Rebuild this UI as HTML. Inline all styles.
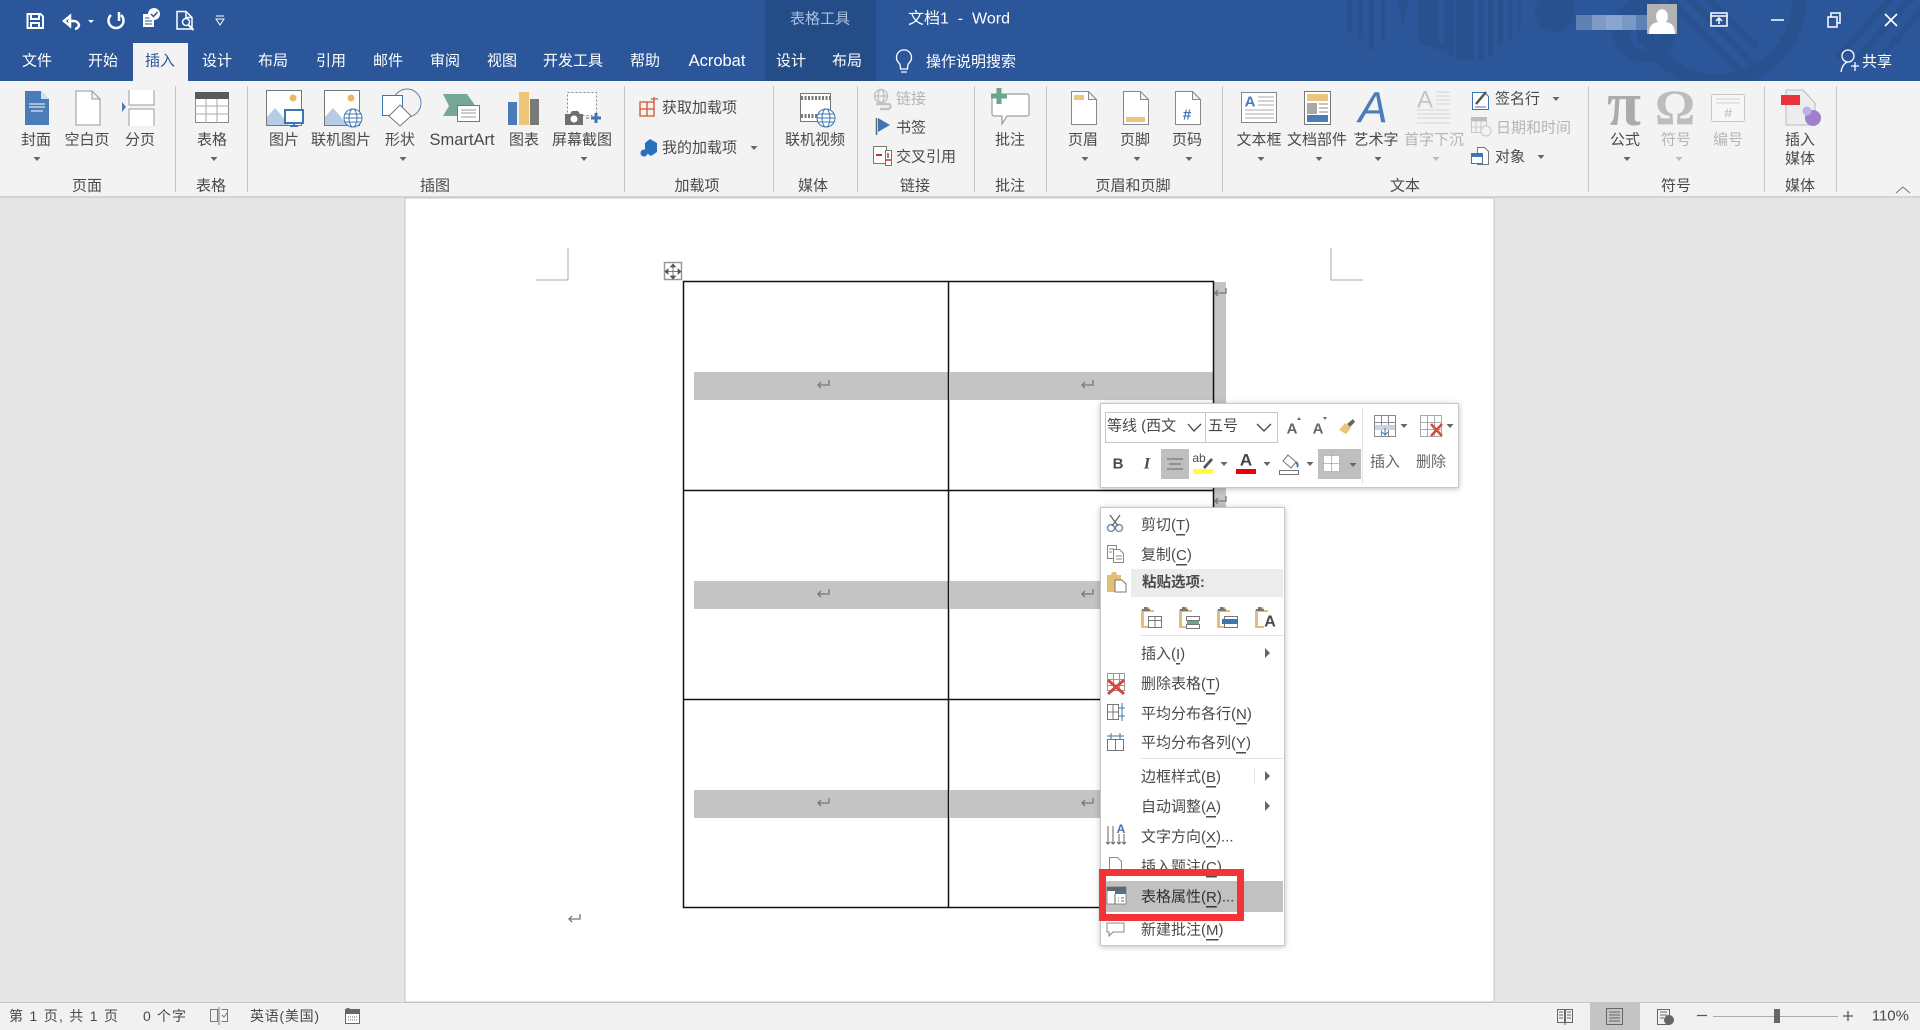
<!DOCTYPE html>
<html lang="zh"><head><meta charset="utf-8"><title>文档1 - Word</title>
<style>
html,body{margin:0;padding:0;width:1920px;height:1030px;overflow:hidden;background:#e6e6e6}
svg{display:block}
text{font-family:"Liberation Sans","Noto Sans CJK SC",sans-serif;font-size:15px;fill:#4a4a4a;dominant-baseline:central}
.m{text-anchor:middle}
.w{fill:#fff}
.d{fill:#b5b5b5}
.u{text-decoration:underline}
.shadow{filter:drop-shadow(0 1px 3px rgba(0,0,0,.25))}
</style></head><body>
<svg width="1920" height="1030" viewBox="0 0 1920 1030" xmlns="http://www.w3.org/2000/svg">
<defs><path id="dn" d="M-3.5 -2h7l-3.500 4z" fill="#666"/><path id="dd" d="M-3.5 -2h7l-3.500 4z" fill="#bbb"/><path id="rt" d="M-2 -5l5 5-5 5z" fill="#666"/>
<path id="ret" d="M12 0v5H1M4 2L1 5l3 3" fill="none" stroke="#777" stroke-width="1.300"/></defs>

<!-- backgrounds -->
<rect width="1920" height="1030" fill="#e6e6e6"/>
<rect width="1920" height="81" fill="#2b579a"/>
<rect x="765" width="111" height="81" fill="#244c87"/>
<!-- title decoration -->
<g fill="#28518f">
<rect x="1347" width="5" height="32"/><rect x="1358" width="5" height="38"/><rect x="1369" width="5" height="50"/><rect x="1381" width="4" height="40"/>
<path d="M1397 0h12l-6 25zM1418 0h20v42l6 4V0h10v56l-10-4-26-10z"/>
<rect x="1456" width="18" height="60"/><rect x="1478" width="6" height="60"/><rect x="1488" width="5" height="56"/><rect x="1498" width="5" height="46"/><rect x="1508" width="4" height="40"/><rect x="1518" width="3" height="30"/>
<circle cx="1555" cy="12" r="20"/>
<path d="M1612 30a32 32 0 1 0 64 0 32 32 0 1 0-64 0zm18 6a15 15 0 1 1 30 0 15 15 0 1 1-30 0z" fill-rule="evenodd"/>
<circle cx="1645" cy="38" r="8"/>
<path d="M1630 0a88 88 0 0 0 176 0h-14a74 74 0 0 1-148 0z"/>
<path d="M1665 0l72 72h10L1675 0zM1685 0l70 70h8L1695 0zM1705 0l50 50 4-6L1715 0z"/>
<path d="M1885 0l-50 56 5 4 54-60zM1905 0l-54 60 5 4L1915 0zM1920 6l-48 58 5 3 43-50z"/>
</g>
<!-- ribbon -->
<rect y="81" width="1920" height="116" fill="#f3f3f3"/>
<rect y="196" width="1920" height="2" fill="#d4d4d4"/>
<rect x="133" y="43" width="55" height="38" fill="#f3f3f3"/>
<!-- status -->
<rect y="1003" width="1920" height="27" fill="#f1f1f1"/>
<rect y="1002" width="1920" height="1" fill="#c6c6c6"/>
<rect x="1590" y="1003" width="50" height="27" fill="#c4c4c4"/>
<!-- page -->
<rect x="405" y="198" width="1089" height="804" fill="#fff" stroke="#c6c6c6"/>

<!-- QAT -->
<g fill="none" stroke="#fff" stroke-width="2">
<path d="M27.500 14h13l2.500 2.500V28H27.500zM31 14v5h8v-5M31 28v-5h8v5"/>
<path d="M64 21l6-5v10zM68 21h6a5 5 0 0 1 5 4 5 5 0 0 1-4 4" stroke-width="2.500"/>
<path d="M119 12v9M111 15a7.500 7.500 0 1 0 10 0" stroke-width="2.500"/>
</g>
<path d="M143 14h11v13h-11z" fill="#fff"/><path d="M145 18h7M145 21h7M145 24h7" stroke="#2b579a" fill="none"/><circle cx="154" cy="14" r="6" fill="#fff"/><path d="M151 14l2.500 2.500 4-4.500" stroke="#2b579a" stroke-width="1.500" fill="none"/>
<g fill="none" stroke="#fff" stroke-width="1.500">
<path d="M177 11.500h9l6 6V29h-15zM186 11.500v6h6"/><circle cx="186" cy="22" r="3.500"/><path d="M188.500 25l5 5" stroke-width="2"/>
<path d="M216 19h8l-4 6zM216 16h8" stroke-width="1"/>
</g>
<path d="M88 20h6l-3 3z" fill="#fff"/>
<!-- titles -->
<text x="820" y="19" class="m" style="fill:#a9c0e2;font-size:15px">表格工具</text>
<text x="959" y="19" class="m w" style="font-size:16px">文档1&#160; -&#160; Word</text>
<!-- tabs -->
<g>
<text x="37" y="61" class="m w">文件</text><text x="103" y="61" class="m w">开始</text><text x="160" y="61" class="m" style="fill:#2b579a">插入</text>
<text x="217" y="61" class="m w">设计</text><text x="273" y="61" class="m w">布局</text><text x="331" y="61" class="m w">引用</text>
<text x="388" y="61" class="m w">邮件</text><text x="445" y="61" class="m w">审阅</text><text x="502" y="61" class="m w">视图</text>
<text x="573" y="61" class="m w">开发工具</text><text x="645" y="61" class="m w">帮助</text><text x="717" y="61" class="m w" style="font-size:16.500px">Acrobat</text>
<text x="791" y="61" class="m w">设计</text><text x="847" y="61" class="m w">布局</text>
<text x="971" y="62" class="m w">操作说明搜索</text><text x="1877" y="62" class="m w">共享</text>
</g>
<g fill="none" stroke="#fff" stroke-width="1.300">
<path d="M901 72h6M899 63a7.500 7.500 0 1 1 10 0c-1 1-1.500 3-1.500 6h-7c0-3-.5-5-1.500-6z"/>
<circle cx="1848" cy="56" r="6"/><path d="M1841 72c1-6 3-9 7-10M1851 66h8M1855 62v9"/>
</g>
<!-- window controls -->
<g fill="none" stroke="#fff" stroke-width="1.500">
<path d="M1711 13h16v13h-16zM1711 16h16"/><path d="M1719 24v-6M1716 21l3-3 3 3"/>
<path d="M1771 20h13"/>
<path d="M1828 17h9v10h-9zM1831 17v-4h9v10h-3"/>
<path d="M1885 14l12 12M1897 14l-12 12" stroke-width="1.700"/>
</g>
<!-- blurred name + avatar -->
<rect x="1576" y="15" width="72" height="15" fill="#5f82b5"/><rect x="1592" y="15" width="14" height="15" fill="#7d9bc6"/><rect x="1606" y="15" width="16" height="15" fill="#8ba6ce"/><rect x="1622" y="15" width="14" height="15" fill="#7a98c4"/>
<rect x="1647" y="4" width="30" height="30" fill="#b2b2b2"/>
<path d="M1649 34c0-9 4-11 9-12-3-3-3-12 4-13 7 1 7 10 4 13 5 1 9 3 9 12z" fill="#fff"/>

<!-- separators -->
<g fill="#c6c6c6"><rect x="175" y="86" width="1" height="106"/><rect x="247" y="86" width="1" height="106"/><rect x="624" y="86" width="1" height="106"/><rect x="773" y="86" width="1" height="106"/><rect x="857" y="86" width="1" height="106"/><rect x="974" y="86" width="1" height="106"/><rect x="1046" y="86" width="1" height="106"/><rect x="1222" y="86" width="1" height="106"/><rect x="1588" y="86" width="1" height="106"/><rect x="1764" y="86" width="1" height="106"/><rect x="1836" y="86" width="1" height="106"/></g>

<!-- ribbon labels -->
<g>
<text x="36" y="140" class="m">封面</text><text x="87" y="140" class="m">空白页</text><text x="140" y="140" class="m">分页</text>
<text x="212" y="140" class="m">表格</text><text x="284" y="140" class="m">图片</text><text x="341" y="140" class="m">联机图片</text><text x="400" y="140" class="m">形状</text>
<text x="462" y="140" class="m" style="font-size:16.500px">SmartArt</text><text x="524" y="140" class="m">图表</text><text x="582" y="140" class="m">屏幕截图</text>
<text x="662" y="108">获取加载项</text><text x="662" y="148">我的加载项</text>
<text x="815" y="140" class="m">联机视频</text>
<text x="896" y="99" class="d">链接</text><text x="896" y="128">书签</text><text x="896" y="157">交叉引用</text>
<text x="1010" y="140" class="m">批注</text>
<text x="1083" y="140" class="m">页眉</text><text x="1135" y="140" class="m">页脚</text><text x="1187" y="140" class="m">页码</text>
<text x="1259" y="140" class="m">文本框</text><text x="1317" y="140" class="m">文档部件</text><text x="1376" y="140" class="m">艺术字</text><text x="1434" y="140" class="m d">首字下沉</text>
<text x="1495" y="99">签名行</text><text x="1496" y="128" class="d">日期和时间</text><text x="1495" y="157">对象</text>
<text x="1625" y="140" class="m">公式</text><text x="1676" y="140" class="m d">符号</text><text x="1728" y="140" class="m d">编号</text>
<text x="1800" y="140" class="m">插入</text><text x="1800" y="159" class="m">媒体</text>
<text x="87" y="186" class="m">页面</text><text x="211" y="186" class="m">表格</text><text x="435" y="186" class="m">插图</text><text x="697" y="186" class="m">加载项</text>
<text x="813" y="186" class="m">媒体</text><text x="915" y="186" class="m">链接</text><text x="1010" y="186" class="m">批注</text><text x="1133" y="186" class="m">页眉和页脚</text>
<text x="1405" y="186" class="m">文本</text><text x="1676" y="186" class="m">符号</text><text x="1800" y="186" class="m">媒体</text>
</g>
<!-- dropdown arrows -->
<use href="#dn" x="37" y="159"/><use href="#dn" x="214" y="159"/><use href="#dn" x="403" y="159"/><use href="#dn" x="584" y="159"/><use href="#dn" x="754" y="148"/>
<use href="#dn" x="1085" y="159"/><use href="#dn" x="1137" y="159"/><use href="#dn" x="1189" y="159"/><use href="#dn" x="1261" y="159"/><use href="#dn" x="1319" y="159"/><use href="#dn" x="1378" y="159"/><use href="#dd" x="1436" y="159"/>
<use href="#dn" x="1556" y="99"/><use href="#dn" x="1541" y="157"/><use href="#dn" x="1627" y="159"/><use href="#dd" x="1679" y="159"/>
<path d="M1896 193l7-6 7 6" fill="none" stroke="#777"/>

<!-- ribbon icons -->
<path d="M25 91h16l8 8v26H25z" fill="#4a7db8"/><path d="M41 91v8h8z" fill="#cfe0f0"/><path d="M29 104h16M29 107h16M31 111h12" stroke="#fff" fill="none"/>
<path d="M76 91h16l8 8v26H76zM92 91v8h8" fill="#fff" stroke="#999"/>
<path d="M129 90v15h25V90M129 126v-17h25v17" fill="#fff" stroke="#999"/><path d="M122 102l4 5-4 5z" fill="#4a7db8"/>
<rect x="195.500" y="92.500" width="33" height="30" fill="#fff" stroke="#888"/><rect x="195" y="92" width="34" height="7" fill="#595959"/><path d="M195 106h34M195 114h34M206 99v24M217 99v24" stroke="#aaa" fill="none"/>
<!-- picture -->
<rect x="266.500" y="90.500" width="35" height="35" fill="#fff" stroke="#777"/><circle cx="293" cy="98" r="3.500" fill="#eab765"/><path d="M267 125v-8l8-9 8 9 6 8z" fill="#b6cce4"/><rect x="285" y="110" width="18" height="13" fill="#fff" stroke="#3f76b2" stroke-width="2"/><path d="M290 126h8M294 123v3" stroke="#3f76b2" stroke-width="2"/>
<rect x="324.500" y="90.500" width="35" height="35" fill="#fff" stroke="#777"/><circle cx="351" cy="98" r="3.500" fill="#eab765"/><path d="M325 125v-8l8-9 8 9 6 8z" fill="#b6cce4"/>
<g fill="#fff" stroke="#3f76b2"><circle cx="353" cy="118" r="9"/><ellipse cx="353" cy="118" rx="4" ry="9"/><path d="M344 118h18M345 114h16M345 122h16" fill="none"/></g>
<circle cx="407" cy="103" r="14" fill="none" stroke="#5a86b8"/><rect x="382.500" y="95.500" width="20" height="20" fill="#fff" stroke="#3f76b2"/><path d="M400 105l11 11-11 10-11-10z" fill="#fff" stroke="#777"/>
<path d="M443 94h24l10 14-7 8h-27l6-10z" fill="#76a695"/><rect x="457.500" y="105.500" width="22" height="16" fill="#fff" stroke="#777"/><path d="M461 110h15M461 113h15M461 117h15" stroke="#999"/>
<rect x="508" y="102" width="9" height="23" fill="#4a7db8"/><rect x="519" y="92" width="10" height="33" fill="#efc577"/><rect x="530" y="99" width="9" height="26" fill="#7a7a7a"/>
<rect x="567.500" y="92.500" width="29" height="23" fill="#fff" stroke="#888" stroke-dasharray="2 2"/><path d="M565 114h5l2-3h6l2 3h3v11h-18z" fill="#6f6f6f"/><circle cx="574" cy="119" r="3.500" fill="#fff"/><path d="M591 118h10M596 113v10" stroke="#3f76b2" stroke-width="3"/><path d="M586 118h3" stroke="#3f76b2"/>
<!-- add-ins -->
<g fill="none" stroke="#d0552e" stroke-width="1.300"><path d="M640 102h14v14h-14zM640 109h14M647 102v14M654 102v-5M651 99h7"/></g>
<path d="M650 139l7 4v9l-6 4-6-4v-9z" fill="#2a70c0"/><circle cx="644" cy="153" r="3.500" fill="#2a70c0"/>
<!-- video -->
<rect x="800.500" y="93.500" width="30" height="28" fill="#fff" stroke="#777"/><path d="M801 98h30M801 116h22" stroke="#777" stroke-width="4" stroke-dasharray="2 1.500"/>
<g fill="#fff" stroke="#3f76b2"><circle cx="826" cy="118" r="9"/><ellipse cx="826" cy="118" rx="4" ry="9"/><path d="M817 118h18M818 114h16M818 122h16" fill="none"/></g>
<!-- links -->
<g fill="none" stroke="#c3c3c3" stroke-width="1.500"><circle cx="881" cy="96" r="6.500"/><ellipse cx="881" cy="96" rx="3" ry="6.500"/><path d="M875 96h12"/><path d="M876 104h12a2.500 2.500 0 0 1 0 5h-8" stroke-width="2.500"/></g>
<path d="M876.500 118v17" stroke="#666" stroke-width="1.500"/><path d="M878 118l12 7-12 7z" fill="#3f76b2"/>
<rect x="873.500" y="146.500" width="13" height="17" fill="#fff" stroke="#777"/><rect x="885.500" y="150.500" width="6" height="15" fill="#fff" stroke="#777"/><path d="M876 155h6" stroke="#c0392b" stroke-width="2"/><path d="M886 160h5M888 153v5" stroke="#c0392b" stroke-width="1.500"/>
<!-- comment -->
<path d="M994 94h33a2 2 0 0 1 2 2v18a2 2 0 0 1-2 2h-20l-5 8v-8h-8a2 2 0 0 1-2-2V96" fill="#fff" stroke="#888"/><path d="M991 96h16M999 88v16" stroke="#6aa58c" stroke-width="5"/>
<!-- header/footer/page -->
<g fill="#fff" stroke="#888"><path d="M1071.500 91.500h17l8 8v25h-25zM1088.500 91.500v8h8"/><path d="M1123.500 91.500h17l8 8v25h-25zM1140.500 91.500v8h8"/><path d="M1175.500 91.500h17l8 8v25h-25zM1192.500 91.500v8h8"/></g>
<rect x="1074" y="95" width="10" height="5" fill="#eac57f"/><rect x="1126" y="117" width="19" height="5" fill="#eac57f"/>
<text x="1187" y="115" class="m" style="fill:#3f76b2;font-size:15px;font-weight:bold">#</text>
<!-- textbox -->
<rect x="1241.500" y="92.500" width="35" height="30" fill="#fff" stroke="#888"/><text x="1250" y="102" class="m" style="fill:#4a7db8;font-size:15px;font-weight:bold">A</text><path d="M1258 97h16M1258 101h16M1258 105h16M1245 110h29M1245 114h29M1245 118h29" stroke="#aaa"/>
<rect x="1304.500" y="91.500" width="26" height="33" fill="#fff" stroke="#777"/><rect x="1307" y="94" width="21" height="7" fill="#eac57f"/><rect x="1307" y="103" width="10" height="11" fill="#a8a8a8"/><path d="M1319 104h9M1319 108h9M1319 112h9" stroke="#888"/><rect x="1307" y="115" width="21" height="7" fill="#4a7db8"/>
<text x="1373" y="108" class="m" style="fill:#4a7db8;font-size:44px;font-style:italic;font-family:'Liberation Sans',sans-serif">A</text>
<text x="1425" y="100" class="m" style="fill:#c4c4c4;font-size:24px">A</text><path d="M1436 92h14M1436 96h14M1436 100h14M1436 104h14M1417 110h33M1417 114h33M1417 118h33M1417 123h33" stroke="#d4d4d4"/>
<!-- signature/date/object -->
<path d="M1472.500 92.500h12l4 4v13h-16z" fill="#fff" stroke="#3f76b2"/><path d="M1476 104l10-12" stroke="#555" stroke-width="2.500"/><path d="M1475 107h11" stroke="#3f76b2"/>
<g fill="none" stroke="#c8c8c8"><rect x="1471.500" y="117.500" width="15" height="15"/><path d="M1471 121h16M1476 121v12M1481 121v12M1471 127h16"/><circle cx="1486" cy="131" r="5" fill="#f3f3f3"/></g><rect x="1471" y="117" width="16" height="4" fill="#bdbdbd"/>
<path d="M1477.500 147.500h7l4 4v13h-11z" fill="#fff" stroke="#777"/><rect x="1471.500" y="153.500" width="11" height="10" fill="#fff" stroke="#3f76b2"/><rect x="1472" y="154" width="10" height="3" fill="#3f76b2"/>
<!-- equation etc -->
<text x="1624" y="105" class="m" style="font-family:'Liberation Serif',serif;font-size:62px;font-weight:bold;fill:#ababab">π</text>
<text x="1675" y="107" class="m" style="font-family:'Liberation Serif',serif;font-size:50px;font-weight:bold;fill:#bdbdbd">Ω</text>
<rect x="1711.500" y="94.500" width="33" height="27" rx="2" fill="#f7f7f7" stroke="#c8c8c8"/><path d="M1716 99h24M1716 103h24" stroke="#d0d0d0"/><text x="1728" y="113" class="m" style="fill:#bbb;font-size:14px;font-style:italic">#</text>
<path d="M1786 90h17l12 13v22h-29z" fill="#ededed" stroke="#bbb"/><rect x="1781" y="95" width="19" height="10" fill="#e8323c"/><circle cx="1813" cy="118" r="8" fill="#9d80cf"/><circle cx="1807" cy="111" r="4.500" fill="#c1aee4"/>

<!-- document guides -->
<path d="M568 248v32h-32M1331 248v32h32" fill="none" stroke="#a8a8a8" stroke-width="1"/>
<rect x="664.500" y="262.500" width="17" height="17" fill="#fff" stroke="#999" stroke-width="1.500"/>
<path d="M673 265v13M666 271.500h14M673 264l-2.500 3h5zM673 279l-2.500-3h5zM665 271.500l3-2.500v5zM681 271.500l-3-2.500v5z" fill="#555" stroke="#555" stroke-width=".8"/>

<!-- table shading -->
<rect x="1213" y="282" width="13" height="625" fill="#c4c4c4"/>
<g fill="#c4c4c4"><rect x="694" y="372" width="254" height="28"/><rect x="950" y="372" width="263" height="28"/><rect x="694" y="581" width="254" height="28"/><rect x="950" y="581" width="263" height="28"/><rect x="694" y="790" width="254" height="28"/><rect x="950" y="790" width="263" height="28"/></g>
<use href="#ret" x="817" y="380"/><use href="#ret" x="1081" y="380"/><use href="#ret" x="817" y="589"/><use href="#ret" x="1081" y="589"/><use href="#ret" x="817" y="798"/><use href="#ret" x="1081" y="798"/><use href="#ret" x="1214" y="288"/><use href="#ret" x="1214" y="496"/><use href="#ret" x="568" y="914"/>
<!-- table -->
<path d="M683.500 281.500H1213.500V907.500H683.500ZM948.500 281.500V907.500M683.500 490.500H1213.500M683.500 699.500H1213.500" fill="none" stroke="#111" stroke-width="1.500"/>

<!-- mini toolbar -->
<g class="shadow"><rect x="1100.500" y="403.500" width="358" height="84" fill="#fff" stroke="#c8c8c8"/></g>
<rect x="1105.500" y="412.500" width="100" height="30" fill="#fff" stroke="#c6c6c6"/><rect x="1205.500" y="412.500" width="72" height="30" fill="#fff" stroke="#c6c6c6"/>
<text x="1107" y="426" style="font-size:15px">等线 (西文</text><text x="1208" y="426" style="font-size:15px">五号</text>
<path d="M1188 424l6 7 7-7M1257 424l7 7 7-7" fill="none" stroke="#444" stroke-width="1.300"/>
<text x="1292" y="429" class="m" style="font-size:15px;font-weight:bold;fill:#666">A</text><path d="M1297 420l2-3 2 3z" fill="#3f76b2"/>
<text x="1318" y="429" class="m" style="font-size:15px;font-weight:bold;fill:#666">A</text><path d="M1323 417l2 3 2-3z" fill="#3f76b2"/>
<path d="M1339 430l6-7 6 5-5 6z" fill="#e8c47e"/><path d="M1347 424l6-5 2 3-5 5z" fill="#666"/>
<rect x="1362" y="408" width="1" height="76" fill="#e4e4e4"/>
<path d="M1374.500 415.500h21v21h-21zM1374.500 422.500h21M1374.500 429.500h21M1381.500 415.500v21M1388.500 415.500v21" fill="#fff" stroke="#888"/><rect x="1375" y="425" width="20" height="5" fill="#c8d4e4"/><path d="M1385 428v7M1382 432l3 3 3-3" stroke="#3f76b2" fill="none"/>
<path d="M1420.500 415.500h21v21h-21zM1420.500 422.500h21M1420.500 429.500h21M1427.500 415.500v21M1434.500 415.500v21" fill="#fff" stroke="#aaa"/><path d="M1431 424l11 12M1442 424l-11 12" stroke="#d44a3c" stroke-width="2.500"/>
<use href="#dn" x="1404" y="426"/><use href="#dn" x="1450" y="426"/>
<text x="1385" y="462" class="m" style="fill:#666">插入</text><text x="1431" y="462" class="m" style="fill:#666">删除</text>
<text x="1118" y="464" class="m" style="font-weight:bold;font-family:'Liberation Sans',sans-serif;font-size:15px">B</text>
<text x="1147" y="464" class="m" style="font-weight:bold;font-style:italic;font-family:'Liberation Serif',serif;font-size:16px">I</text>
<rect x="1161" y="449" width="28" height="30" fill="#bfbfbf"/><path d="M1167 459h16M1169 464h12M1167 469h16" stroke="#666"/>
<text x="1199" y="458" class="m" style="font-size:12px">ab</text><path d="M1203 467l8-9 2 2-8 9z" fill="#555"/><rect x="1193" y="469" width="20" height="5" fill="#ffff33"/><use href="#dn" x="1224" y="464"/>
<text x="1246" y="460" class="m" style="font-size:17px;font-weight:bold;fill:#444">A</text><rect x="1236" y="469" width="20" height="5" fill="#e8000b"/><use href="#dn" x="1267" y="464"/>
<path d="M1288 455l8 7-5 6-8-7zM1279.500 470.500h19v4h-19z" fill="#fff" stroke="#777"/><path d="M1296 462c2 2 2 4 1 5" stroke="#3f76b2" stroke-width="2" fill="none"/><use href="#dn" x="1310" y="464"/>
<rect x="1318" y="449" width="43" height="30" fill="#bfbfbf"/><rect x="1323" y="455" width="17" height="17" fill="#fff"/><path d="M1323.500 455.500h16v16h-16zM1331.500 455.500v16M1323.500 463.500h16" fill="none" stroke="#777" stroke-dasharray="1 1"/><use href="#dn" x="1353" y="465"/>

<!-- context menu -->
<g class="shadow"><rect x="1100.500" y="507.500" width="184" height="438" fill="#fff" stroke="#c8c8c8"/></g>
<rect x="1131" y="569" width="152" height="28" fill="#ececec"/>
<rect x="1141" y="635" width="142" height="1" fill="#e2e2e2"/><rect x="1141" y="758" width="142" height="1" fill="#e2e2e2"/><rect x="1254" y="768" width="1" height="16" fill="#e2e2e2"/>
<rect x="1106" y="881" width="177" height="31" fill="#c1c1c1"/>
<g>
<text x="1141" y="525">剪切(<tspan class="u">T</tspan>)</text><text x="1141" y="555">复制(<tspan class="u">C</tspan>)</text>
<text x="1142" y="583" style="font-weight:bold;font-size:14.500px">粘贴选项:</text>
<text x="1141" y="654">插入(<tspan class="u">I</tspan>)</text><text x="1141" y="684">删除表格(<tspan class="u">T</tspan>)</text>
<text x="1141" y="714">平均分布各行(<tspan class="u">N</tspan>)</text><text x="1141" y="743">平均分布各列(<tspan class="u">Y</tspan>)</text>
<text x="1141" y="777">边框样式(<tspan class="u">B</tspan>)</text><text x="1141" y="807">自动调整(<tspan class="u">A</tspan>)</text>
<text x="1141" y="837">文字方向(<tspan class="u">X</tspan>)...</text><text x="1141" y="867">插入题注(<tspan class="u">C</tspan>)</text>
<text x="1141" y="897" style="fill:#333">表格属性(<tspan class="u">R</tspan>)...</text><text x="1141" y="930">新建批注(<tspan class="u">M</tspan>)</text>
</g>
<use href="#rt" x="1267" y="653"/><use href="#rt" x="1267" y="776"/><use href="#rt" x="1267" y="806"/>
<!-- menu icons -->
<g fill="none" stroke="#5d7fa8" stroke-width="1.300"><circle cx="1111" cy="528" r="3.500"/><circle cx="1119" cy="528" r="3.500"/></g><path d="M1110 515l8 11M1120 515l-8 11" stroke="#666" stroke-width="1.300" fill="none"/>
<g fill="#fff" stroke="#888"><path d="M1107.500 545.500h9v13h-9z"/><path d="M1113.500 549.500h6l4 4v9h-10z"/></g><path d="M1109 549h5M1109 552h3M1116 556h6M1116 559h6" stroke="#888"/>
<path d="M1107 575h4l1-3h4l1 3h4v17h-14z" fill="#e4bd76"/><path d="M1115 580h7l4 4v8h-11z" fill="#fff" stroke="#777"/>
<path d="M1141 610h4l1-3h3l1 3h4v2h-10v14h6v2h-9z" fill="#e4bd76"/><path d="M1144 607h3l1 2h2v2h-8v-2h2z" fill="#777"/><path d="M1148.500 616.500h13v11h-13zM1148.500 620.500h13M1155 616.500v11" fill="#fff" stroke="#777"/>
<path d="M1179 610h4l1-3h3l1 3h4v2h-10v14h6v2h-9z" fill="#e4bd76"/><path d="M1182 607h3l1 2h2v2h-8v-2h2z" fill="#777"/><path d="M1186.500 616.500h13v4h-13zM1186.500 624.500h13v4h-13z" fill="#fff" stroke="#777"/><rect x="1187" y="621" width="12" height="3" fill="#6aa58c"/>
<path d="M1217 610h4l1-3h3l1 3h4v2h-10v14h6v2h-9z" fill="#e4bd76"/><path d="M1220 607h3l1 2h2v2h-8v-2h2z" fill="#777"/><path d="M1224.500 616.500h13v11h-13z" fill="#fff" stroke="#777"/><rect x="1222" y="619" width="16" height="5" fill="#3f76b2"/>
<path d="M1255 610h4l1-3h3l1 3h4v2h-10v14h6v2h-9z" fill="#e4bd76"/><path d="M1258 607h3l1 2h2v2h-8v-2h2z" fill="#777"/><text x="1270" y="622" class="m" style="font-size:16px;font-weight:bold">A</text>
<path d="M1107.500 673.500h17v17h-17zM1107.500 679.500h17M1107.500 685.500h17M1113.500 673.500v17M1119.500 673.500v17" fill="#fff" stroke="#999"/><path d="M1108 680l16 14M1124 680l-16 14" stroke="#d44a3c" stroke-width="3"/>
<path d="M1107.500 704.500h11v15h-11zM1107.500 712h11M1113 704.500v15" fill="none" stroke="#777"/><path d="M1122 703v18M1119 708h6M1119 716h6" stroke="#3f76b2" fill="none"/>
<path d="M1107.500 739.500h16v11h-16zM1115.500 739.500v11" fill="none" stroke="#777"/><path d="M1107 736h17M1111 733v6M1120 733v6" stroke="#3f76b2" fill="none"/>
<path d="M1108 826v18M1113 826v18M1119 834v10M1124 834v10M1106 842l2 2 2-2M1111 842l2 2 2-2M1117 842l2 2 2-2M1122 842l2 2 2-2" stroke="#666" fill="none"/><text x="1121" y="829" class="m" style="font-size:12px;font-weight:bold;fill:#3f76b2">A</text>
<path d="M1109.500 857.500h8l4 4v9h-12z" fill="#fff" stroke="#888"/>
<rect x="1107" y="887" width="19" height="17" fill="#fff" stroke="#777" stroke-width=".8"/><rect x="1107" y="887" width="19" height="4" fill="#666"/><rect x="1115" y="891" width="11" height="3" fill="#3f76b2"/><path d="M1115 894v10M1118 898h1M1118 901h1M1121 898h3M1121 901h3" stroke="#666"/>
<path d="M1107 923h17v9h-11l-4 4v-4h-2z" fill="#fff" stroke="#888"/>
<!-- red highlight -->
<rect x="1102.500" y="872.500" width="138" height="45" fill="none" stroke="#f23338" stroke-width="7"/>

<!-- status text -->
<text x="9" y="1016" textLength="109" style="font-size:14px">第 1 页, 共 1 页</text>
<text x="143" y="1016" textLength="43" style="font-size:14px">0 个字</text>
<text x="250" y="1016" textLength="69" style="font-size:14px">英语(美国)</text>
<path d="M210.500 1009.500h7v12h-7zM221.500 1009.500h6v12h-6M219 1007v18M222 1015l2 2 3-4" fill="none" stroke="#777"/>
<rect x="345.500" y="1010.500" width="14" height="13" fill="#fff" stroke="#666"/><rect x="345" y="1009" width="15" height="5" fill="#666"/><circle cx="348" cy="1011" r="3" fill="#666"/><path d="M348 1017h10M348 1020h10" stroke="#666" stroke-dasharray="1 1"/>
<path d="M1557.500 1009.500h7v13h-7zM1565.500 1009.500h7v13h-7zM1559 1012h4M1559 1015h4M1559 1018h4M1567 1012h4M1567 1015h4M1567 1018h4M1565 1022v3" fill="none" stroke="#666"/>
<path d="M1606.500 1008.500h16v16h-16zM1609 1012h11M1609 1015h11M1609 1018h11M1609 1021h11" fill="none" stroke="#666"/>
<path d="M1657.500 1009.500h12v15h-12zM1660 1012h7M1660 1015h7M1660 1018h4" fill="none" stroke="#666"/><circle cx="1669" cy="1020" r="5" fill="#666"/>
<path d="M1697 1015.500h10M1843 1016h10M1848 1011v10" stroke="#555" stroke-width="1.300" fill="none"/>
<rect x="1713" y="1016" width="125" height="1" fill="#aaa"/><rect x="1774" y="1009" width="6" height="14" fill="#666"/>
<text x="1909" y="1016" style="text-anchor:end;font-size:15px">110%</text>
</svg>
</body></html>
